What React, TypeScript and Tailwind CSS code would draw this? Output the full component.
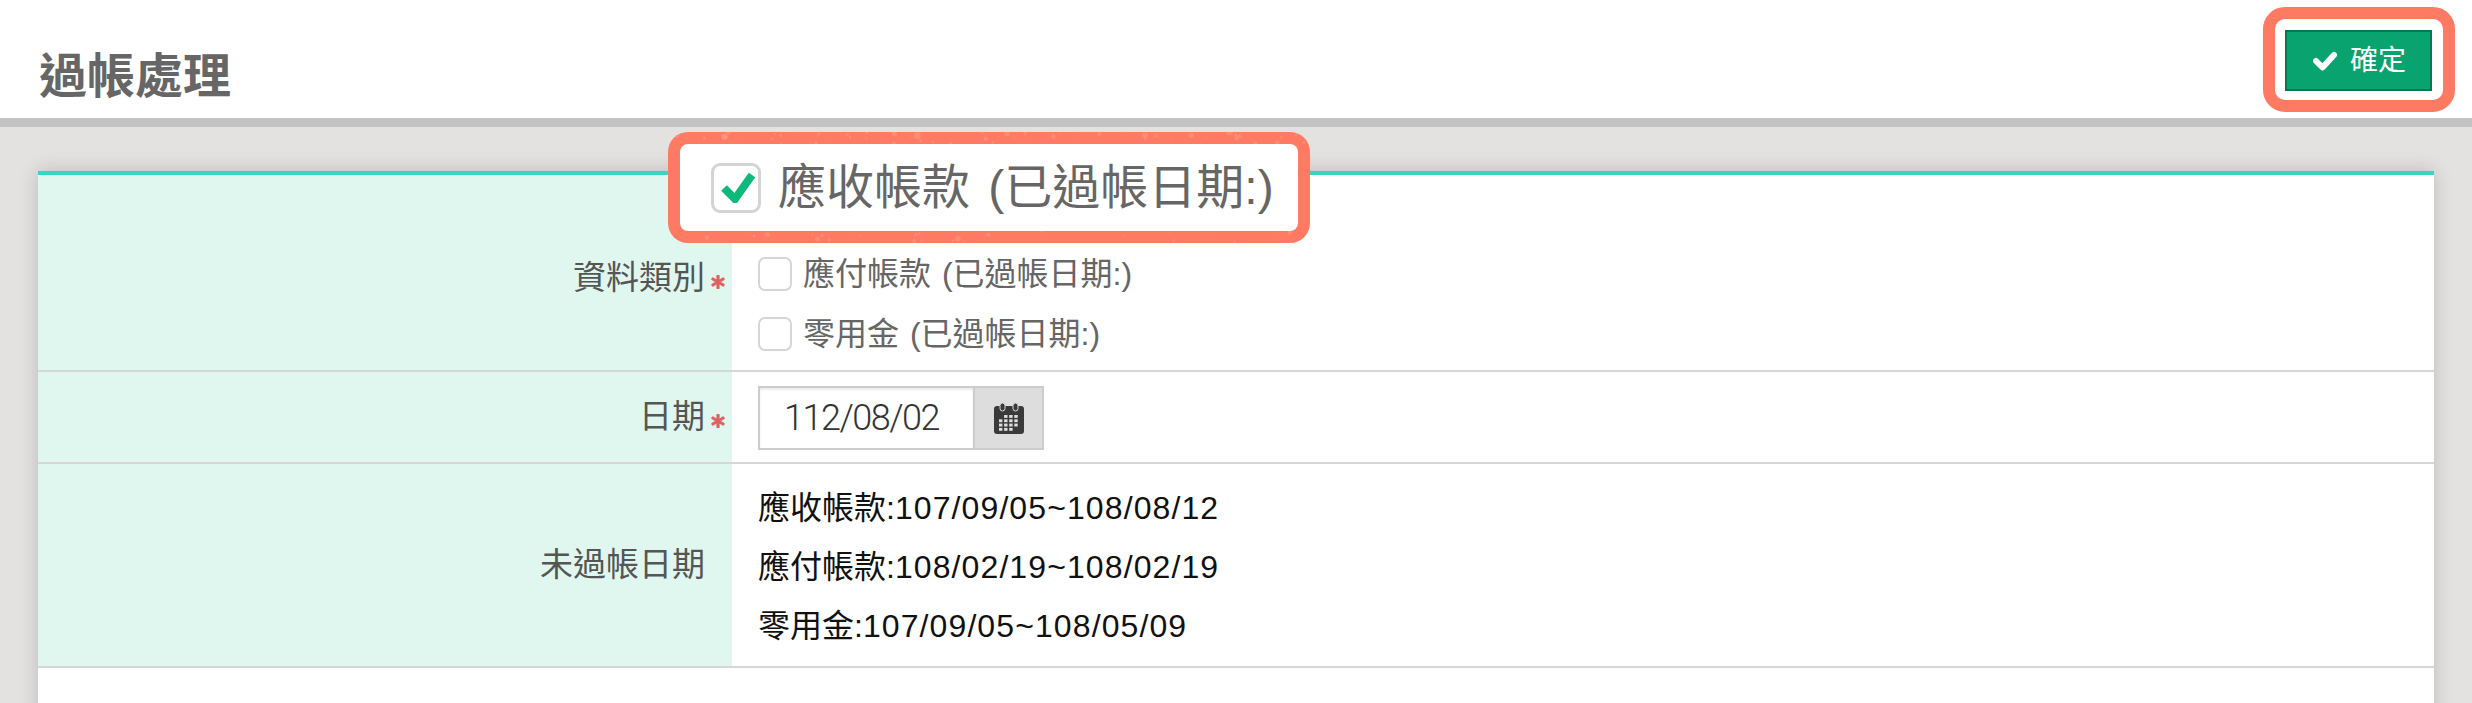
import { FaAsterisk } from "react-icons/fa";

const cjk = "font-['Liberation_Sans','Noto_Sans_CJK_TC',sans-serif]";

function Req() {
  return <FaAsterisk className="ml-[6px] w-[14px] h-[14px] text-[#e06060] translate-y-[4px]" stroke="currentColor" strokeWidth={30} />;
}

function Box() {
  return <span className="w-[34px] h-[34px] rounded-[7px] border-2 border-[#d6d6d6] bg-white shrink-0" />;
}

function Option({ text }: { text: string }) {
  return (
    <div className="flex items-center h-[34px] gap-[11px] text-[32px] text-[#666]">
      <Box />
      <span className="leading-none [word-spacing:2px]">{text}</span>
    </div>
  );
}

function CalendarIcon() {
  const dots = [];
  for (let y = 0; y < 4; y++) {
    for (let x = 0; x < 4; x++) {
      if ((y === 0 && x === 0) || (y === 3 && x === 3)) continue;
      dots.push(<rect key={`${x}-${y}`} x={5 + x * 5.1} y={13 + y * 4.3} width="3.4" height="2.9" fill="#ddd" />);
    }
  }
  return (
    <svg width="30" height="32" viewBox="0 0 30 32">
      <path d="M3 4h24a3 3 0 0 1 3 3v22a3 3 0 0 1-3 3H3a3 3 0 0 1-3-3V7a3 3 0 0 1 3-3z" fill="#3a3a3a" />
      <rect x="6" y="1" width="5" height="8" rx="2.5" fill="#3a3a3a" stroke="#ddd" strokeWidth="1" />
      <rect x="19" y="1" width="5" height="8" rx="2.5" fill="#3a3a3a" stroke="#ddd" strokeWidth="1" />
      {dots}
    </svg>
  );
}

// light speckles on the callout ring
function Speckle({ w, h }: { w: number; h: number }) {
  const dots = [];
  let seed = 7;
  const next = () => {
    seed = (seed * 9301 + 49297) % 233280;
    return seed / 233280;
  };
  for (let i = 0; i < 110; i++) {
    const x = next() * w;
    const top = next() < 0.7;
    const y = top ? next() * 12 : h - next() * 12;
    dots.push(<circle key={i} cx={x} cy={y} r={0.5 + next() * next() * 3.5} fill="#ffa391" opacity={0.4} />);
  }
  return (
    <svg className="absolute left-0 top-0 rounded-[20px]" width={w} height={h}>
      {dots}
    </svg>
  );
}

function Label({ children }: { children: React.ReactNode }) {
  return (
    <div className="w-[694px] shrink-0 bg-[#dff7ef] flex items-center justify-end pr-[7px] text-[33px] text-[#555]">
      {children}
    </div>
  );
}

function Range({ name, range }: { name: string; range: string }) {
  return (
    <div>
      {name}:<span className="tracking-[1.1px]">{range}</span>
    </div>
  );
}

export default function App() {
  return (
    <div className={`relative h-[703px] overflow-hidden bg-[#e3e2e0] ${cjk}`}>
      <header className="h-[127px] bg-white border-b-[9px] border-[#c3c3c3] flex items-end justify-between pl-[39px] pr-[40px] pb-[11px]">
        <h1 className="text-[48px] leading-[60px] font-bold text-[#666]">過帳處理</h1>
        <button className="w-[147px] h-[61px] mb-[16px] bg-[#08a36e] border-2 border-[#0a7552] text-white text-[28px] flex items-center justify-center gap-[13px]">
          <svg className="ml-[2px]" width="24" height="20" viewBox="0 0 24 20">
            <path d="M3 10l6.5 6.5L21 4" fill="none" stroke="#fff" strokeWidth="6" strokeLinejoin="round" strokeLinecap="round" />
          </svg>
          確定
        </button>
      </header>

      <main className="px-[38px] pt-[44px]">
        <div className="h-[600px] bg-white border-t-4 border-[#37d6c4] shadow-[0_0_18px_rgba(0,0,0,0.18)]">
          <div className="flex h-[197px] border-b-2 border-[#d6d6d6]">
            <Label>
              <span className="translate-y-[5px] flex items-center">資料類別<Req /></span>
            </Label>
            <div className="pl-[26px] pt-[82px] flex flex-col gap-[26px]">
              <Option text="應付帳款 (已過帳日期:)" />
              <Option text="零用金 (已過帳日期:)" />
            </div>
          </div>

          <div className="flex h-[92px] border-b-2 border-[#d6d6d6]">
            <Label>
              <span className="flex items-center">日期<Req /></span>
            </Label>
            <div className="pl-[26px] pt-[14px]">
              <div className="flex w-[286px] h-[64px] border-2 border-[#cccccc]">
                <div className="w-[213px] pl-[24px] flex items-center font-['Roboto','Liberation_Sans',sans-serif] font-light text-[36px] tracking-[-1.5px] text-[#333] shadow-[inset_0_2px_2px_rgba(0,0,0,0.08)]">112/08/02</div>
                <div className="flex-1 bg-[#dddddd] border-l-2 border-[#cccccc] flex items-center justify-center">
                  <CalendarIcon />
                </div>
              </div>
            </div>
          </div>

          <div className="flex h-[204px] border-b-2 border-[#d6d6d6]">
            <Label>
              <span className="mr-[20px]">未過帳日期</span>
            </Label>
            <div className="pl-[26px] pt-[23px] flex flex-col gap-[16px] text-[32px] leading-[43px] text-[#111]">
              <Range name="應收帳款" range="107/09/05~108/08/12" />
              <Range name="應付帳款" range="108/02/19~108/02/19" />
              <Range name="零用金" range="107/09/05~108/05/09" />
            </div>
          </div>
        </div>
      </main>

      {/* callouts drawn over the page */}
      <div className="absolute left-[2263px] top-[7px] w-[192px] h-[105px] rounded-[22px] border-[12px] border-[#ff7a63]" />
      <div className="absolute left-[668px] top-[132px] w-[642px] h-[111px] rounded-[20px] bg-[#ff7a63]">
        <Speckle w={642} h={111} />
        <div className="absolute inset-[12px] rounded-[8px] bg-white flex items-center">
          <span className="relative ml-[31px] w-[50px] h-[50px] rounded-[9px] border-[3px] border-[#d4d4d4] bg-white shrink-0">
            <svg className="absolute left-[6px] top-[5px]" width="37" height="32" viewBox="0 0 37 32">
              <path d="M4 17l11 11L32 4" fill="none" stroke="#0fb97c" strokeWidth="8" />
            </svg>
          </span>
          <span className="ml-[17px] text-[48px] leading-none text-[#666] whitespace-nowrap [word-spacing:5px]">應收帳款 (已過帳日期:)</span>
        </div>
      </div>
    </div>
  );
}
